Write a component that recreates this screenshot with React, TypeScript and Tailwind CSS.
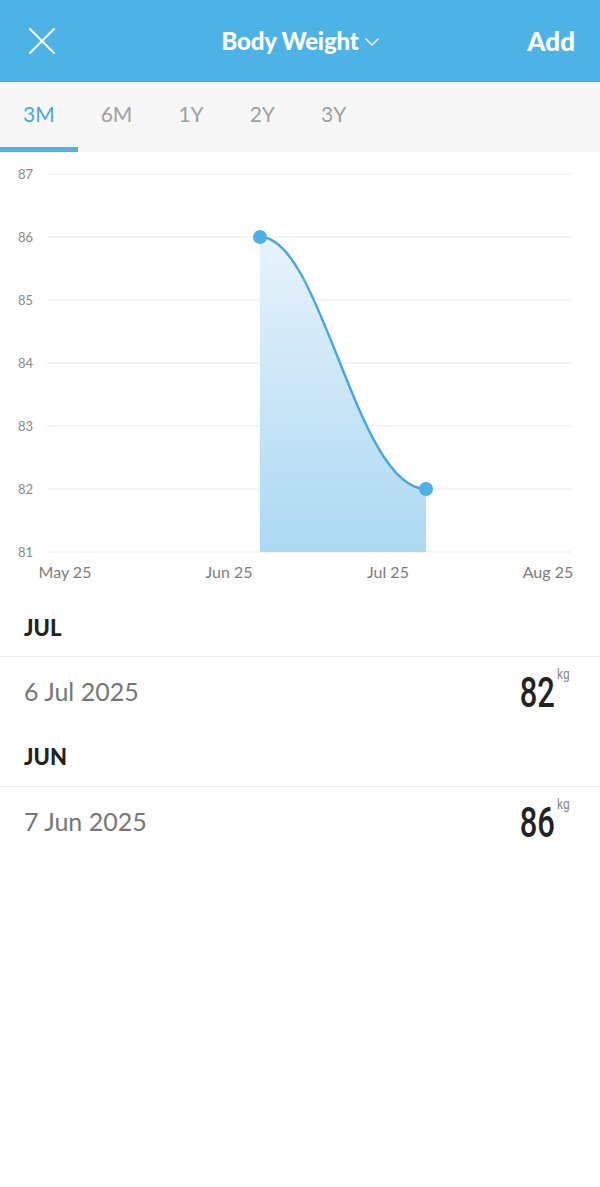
import React from 'react';

const Y_TICKS = [87, 86, 85, 84, 83, 82, 81];
const X_TICKS = [
  { label: 'May 25', x: 65 },
  { label: 'Jun 25', x: 229 },
  { label: 'Jul 25', x: 388 },
  { label: 'Aug 25', x: 548 },
];

const entries = [
  { month: 'JUL', date: '6 Jul 2025', value: 82 },
  { month: 'JUN', date: '7 Jun 2025', value: 86 },
];

const tabs = ['3M', '6M', '1Y', '2Y', '3Y'];

// chart uses page coordinates via viewBox offset
const yFor = (v: number) => 174 + (87 - v) * 63;

function Chart() {
  const p1 = { x: 260, y: yFor(86) };
  const p2 = { x: 426, y: yFor(82) };
  const curve = `M${p1.x},${p1.y} C${p1.x + 62},${p1.y} ${p2.x - 70},${p2.y} ${p2.x},${p2.y}`;
  const area = `${curve} L${p2.x},552 L${p1.x},552 Z`;

  return (
    <svg width="600" height="446" viewBox="0 152 600 446" className="block">
      <defs>
        <linearGradient id="fillGrad" x1="0" y1="0" x2="0" y2="1">
          <stop offset="0%" stopColor="#e8f3fb" />
          <stop offset="100%" stopColor="#acd9f3" />
        </linearGradient>
      </defs>
      {Y_TICKS.map((v) => (
        <g key={v}>
          <line x1="47" x2="571" y1={yFor(v)} y2={yFor(v)} stroke="#e9e9e9" strokeWidth="1" />
          <text
            x="18"
            y={yFor(v) + 4.5}
            fontSize="13"
            fill="#8a8a8a"
            fontFamily="Lato, 'Noto Sans', sans-serif"
          >
            {v}
          </text>
        </g>
      ))}
      <path d={area} fill="url(#fillGrad)" />
      <path d={curve} fill="none" stroke="#4aa9dc" strokeWidth="2.5" />
      <circle cx={p1.x} cy={p1.y} r="7" fill="#4cb1e6" />
      <circle cx={p2.x} cy={p2.y} r="7" fill="#4cb1e6" />
      {X_TICKS.map((t) => (
        <text
          key={t.label}
          x={t.x}
          y="578"
          textAnchor="middle"
          fontSize="16"
          fill="#7d7d7d"
          fontFamily="Lato, 'Noto Sans', sans-serif"
        >
          {t.label}
        </text>
      ))}
    </svg>
  );
}

export default function App() {
  return (
    <div className="w-[600px] min-h-[1187px] bg-white font-['Lato','Noto_Sans',sans-serif]">
      {/* Header */}
      <div className="h-[82px] bg-[#4db3e7] flex items-center justify-between pl-[28px] pr-[25px] relative">
        <svg width="28" height="28" viewBox="0 0 28 28" className="shrink-0">
          <path d="M2 2 L26 26 M26 2 L2 26" stroke="#fff" strokeWidth="2" strokeLinecap="round" />
        </svg>
        <div className="absolute left-0 right-0 top-0 h-full flex items-center justify-center pointer-events-none">
          <span className="text-white text-[24px] font-black tracking-[-0.2px]">Body Weight</span>
          <svg width="14" height="8" viewBox="0 0 14 8" className="ml-[6px] mt-[2px]">
            <path d="M1 1 L7 7 L13 1" stroke="#fff" strokeWidth="1.4" fill="none" strokeLinecap="round" />
          </svg>
        </div>
        <span className="text-white text-[26px] font-black">Add</span>
      </div>

      {/* Range tabs */}
      <div className="h-[70px] bg-[#f7f7f7] flex">
        {tabs.map((t, i) => (
          <div key={t} className="relative h-full flex items-center px-[23px] pb-[6px]">
            <span className={`text-[21px] ${i === 0 ? 'text-[#4aa7d9]' : 'text-[#a0a0a0]'}`}>{t}</span>
            {i === 0 && <div className="absolute left-0 bottom-0 w-[78px] h-[5px] bg-[#4db3e7]" />}
          </div>
        ))}
      </div>

      <Chart />

      {/* Entries */}
      <div>
        {entries.map((e, i) => (
          <div key={e.month}>
            <div className={`${i === 0 ? 'h-[58px]' : 'h-[59px]'} flex items-center px-6`}>
              <span className="text-[22px] font-black text-[#222]">{e.month}</span>
            </div>
            <div className="h-px bg-[#ececec]" />
            <div className="h-[70px] flex items-center justify-between pl-6 pr-[28px]">
              <span className="text-[25px] text-[#777]">{e.date}</span>
              <div className="flex items-start">
                <span className="inline-block origin-right scale-x-[0.72] text-[43px] leading-none font-medium text-[#222] font-['Roboto',sans-serif] -ml-[13px]">
                  {e.value}
                </span>
                <span className="text-[14px] leading-none text-[#888] ml-[2px] -mt-[4px] inline-block origin-left scale-x-[0.85] font-['Roboto',sans-serif]">
                  kg
                </span>
              </div>
            </div>
          </div>
        ))}
      </div>
    </div>
  );
}
